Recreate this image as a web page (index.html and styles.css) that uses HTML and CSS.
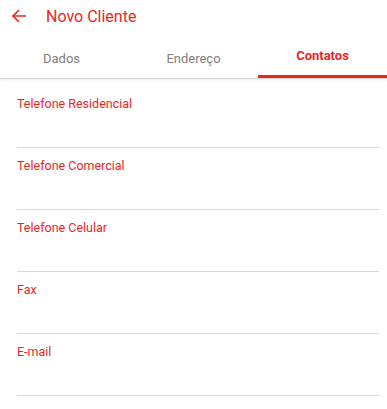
FILE: index.html
```html
<!DOCTYPE html>
<html>
<head>
<meta charset="utf-8">
<link rel="stylesheet" href="styles.css">
</head>
<body>
<div class="app">
  <header class="toolbar">
    <svg class="back" width="16" height="16" viewBox="0 0 16 16">
      <path d="M15 8H2M8 2L2 8l6 6" fill="none" stroke="#e5281f" stroke-width="1.6"/>
    </svg>
    <span class="title">Novo Cliente</span>
  </header>
  <nav class="tabs">
    <div class="tab">Dados</div>
    <div class="tab">Endereço</div>
    <div class="tab active">Contatos</div>
  </nav>
  <main class="form">
    <div class="field"><label>Telefone Residencial</label></div>
    <div class="field"><label>Telefone Comercial</label></div>
    <div class="field"><label>Telefone Celular</label></div>
    <div class="field"><label>Fax</label></div>
    <div class="field"><label>E-mail</label></div>
  </main>
</div>
</body>
</html>
```

FILE: styles.css
```css
html, body {
  margin: 0;
  padding: 0;
  background: #fff;
}
.app {
  font-family: Roboto, "Liberation Sans", sans-serif;
  width: 387px;
}
.toolbar {
  height: 32px;
  display: flex;
  align-items: center;
  padding-left: 11px;
}
.back {
  display: block;
}
.title {
  margin-left: 19px;
  color: #e5281f;
  font-size: 16px;
}
.tabs {
  display: grid;
  grid-template-columns: 1fr 1fr 1fr;
  height: 46px;
  border-bottom: 1px solid #d6d6d6;
  box-shadow: 0 1px 2px rgba(0,0,0,0.08);
}
.tab {
  display: flex;
  align-items: center;
  justify-content: center;
  font-size: 13px;
  color: #808080;
  box-sizing: border-box;
  padding-top: 6px;
}
.tab:first-child {
  padding-right: 6px;
}
.tab.active {
  color: #e5281f;
  font-weight: bold;
  border-bottom: 3px solid #e5281f;
  padding-top: 3px;
}
.form {
  padding: 7px 8px 0 17px;
}
.field {
  box-sizing: border-box;
  height: 62px;
  padding-top: 11px;
  border-bottom: 1px solid #d8d8d8;
}
.field label {
  display: block;
  color: #e5281f;
  font-size: 12.5px;
  line-height: 14px;
}
```
